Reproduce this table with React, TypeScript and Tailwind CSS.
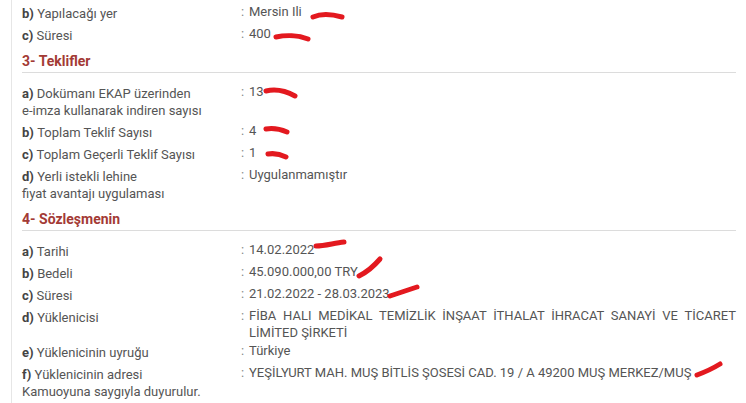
import React from "react";

type Row = { k: string; label: string[]; value: string[]; justify?: boolean };

const FONT = { fontFamily: "Roboto, 'Liberation Sans', Arial, sans-serif" };

const top: Row[] = [
  { k: "b)", label: ["Yapılacağı yer"], value: ["Mersin Ili"] },
  { k: "c)", label: ["Süresi"], value: ["400"] },
];

const teklifler: Row[] = [
  { k: "a)", label: ["Dokümanı EKAP üzerinden", "e-imza kullanarak indiren sayısı"], value: ["13"] },
  { k: "b)", label: ["Toplam Teklif Sayısı"], value: ["4"] },
  { k: "c)", label: ["Toplam Geçerli Teklif Sayısı"], value: ["1"] },
  { k: "d)", label: ["Yerli istekli lehine", "fiyat avantajı uygulaması"], value: ["Uygulanmamıştır"] },
];

const sozlesme: Row[] = [
  { k: "a)", label: ["Tarihi"], value: ["14.02.2022"] },
  { k: "b)", label: ["Bedeli"], value: ["45.090.000,00 TRY"] },
  { k: "c)", label: ["Süresi"], value: ["21.02.2022 - 28.03.2023"] },
  {
    k: "d)",
    label: ["Yüklenicisi"],
    value: ["FİBA HALI MEDİKAL TEMİZLİK İNŞAAT İTHALAT İHRACAT SANAYİ VE TİCARET LİMİTED ŞİRKETİ"],
    justify: true,
  },
  { k: "e)", label: ["Yüklenicinin uyruğu"], value: ["Türkiye"] },
  { k: "f)", label: ["Yüklenicinin adresi", "Kamuoyuna saygıyla duyurulur."], value: ["YEŞİLYURT MAH. MUŞ BİTLİS ŞOSESİ CAD. 19 / A 49200 MUŞ MERKEZ/MUŞ"] },
];

function InfoRow({ row }: { row: Row }) {
  return (
    <div className="flex text-[13px] leading-[17px] text-[#555]">
      <div className="w-[219px] shrink-0 pt-[3px] pb-[2px]">
        {row.label.map((l, i) => (
          <div key={i}>
            {i === 0 && <span className="font-bold text-[#444]">{row.k} </span>}
            {l}
          </div>
        ))}
      </div>
      <div className="flex flex-1 pt-[1px]">
        <span className="w-[8px] shrink-0 text-[#888]">:</span>
        <div className={row.justify ? "flex-1 text-justify" : "flex-1"}>{row.value.join(" ")}</div>
      </div>
    </div>
  );
}

function Heading({ title }: { title: string }) {
  return (
    <div className="mt-[7px] mb-[9px] border-b border-[#dcdcdc] pb-[2px] text-[14px] font-bold leading-[17px] text-[#a33a35]">
      {title}
    </div>
  );
}

export default function App() {
  return (
    <div className="relative h-[403px] w-[746px] overflow-hidden bg-white" style={FONT}>
      <div className="ml-[11px] h-full border-l border-[#e6e6e6] pl-[10px] pr-[10px] pt-[2px]">
        {top.map((r, i) => <InfoRow key={i} row={r} />)}
        <Heading title="3- Teklifler" />
        {teklifler.map((r, i) => <InfoRow key={i} row={r} />)}
        <Heading title="4- Sözleşmenin" />
        {sozlesme.map((r, i) => <InfoRow key={i} row={r} />)}
      </div>

      {/* red redaction scribbles drawn over the text */}
      <svg className="pointer-events-none absolute left-0 top-0" width="746" height="403" fill="none" stroke="#e3191f" strokeLinecap="round" strokeWidth="5">
        <path d="M313,17 C320,14 331,14 342,17" />
        <path d="M276,37 C285,35 298,35 308,39" />
        <path d="M266,91 C275,89 286,91 295,96" />
        <path d="M266,129 C272,128 280,129 287,132" />
        <path d="M268,154 C274,153 280,154 286,157" />
        <path d="M316,246 C325,246 334,243 344,242" />
        <path d="M359,276 C367,272 374,266 380,259" />
        <path d="M390,296 C399,293 408,290 417,287" />
        <path d="M697,375 C705,372 712,369 720,364" />
      </svg>
    </div>
  );
}
